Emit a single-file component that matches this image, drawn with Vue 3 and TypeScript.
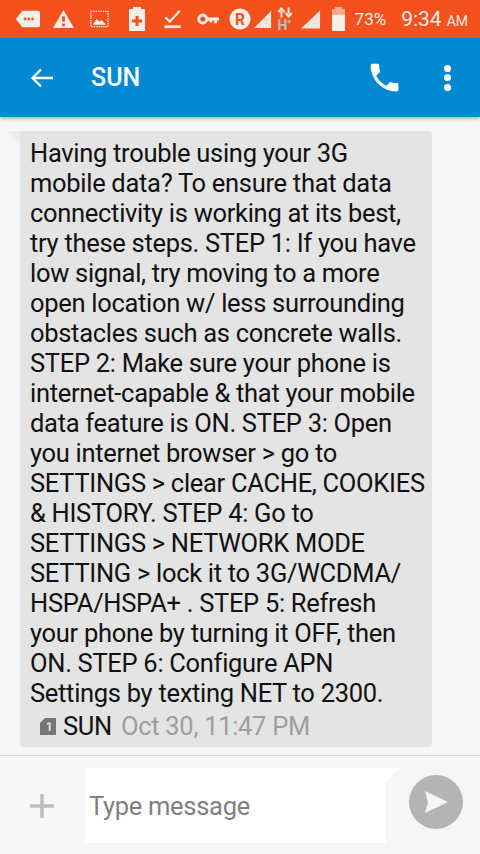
<script setup lang="ts">
const lines: string[] = [
  'Having trouble using your 3G',
  'mobile data? To ensure that data',
  'connectivity is working at its best,',
  'try these steps. STEP 1: If you have',
  'low signal, try moving to a more',
  'open location w/ less surrounding',
  'obstacles such as concrete walls.',
  'STEP 2: Make sure your phone is',
  'internet-capable & that your mobile',
  'data feature is ON. STEP 3: Open',
  'you internet browser > go to',
  'SETTINGS > clear CACHE, COOKIES',
  '& HISTORY. STEP 4: Go to',
  'SETTINGS > NETWORK MODE',
  'SETTING > lock it to 3G/WCDMA/',
  'HSPA/HSPA+ . STEP 5: Refresh',
  'your phone by turning it OFF, then',
  'ON. STEP 6: Configure APN',
  'Settings by texting NET to 2300.',
]
</script>

<template>
  <div class="screen">
    <div class="status">
      <div class="status-left">
        <svg class="i s-tag" viewBox="0 0 27 20"><path d="M1 10 8 1h17a2 2 0 0 1 2 2v14a2 2 0 0 1-2 2H8z" fill="#f3efe9"/><circle cx="11" cy="10" r="1.500" fill="#f4511e"/><circle cx="15" cy="10" r="1.500" fill="#f4511e"/><circle cx="19" cy="10" r="1.500" fill="#f4511e"/></svg>
        <svg class="i s-warn" viewBox="0 0 25 22"><path d="M12.500 1 24 21H1z" fill="#f3efe9"/><rect x="11" y="8" width="3" height="6" fill="#f4511e"/><rect x="11" y="16" width="3" height="3" fill="#f4511e"/></svg>
        <svg class="i s-img" viewBox="0 0 20 20"><rect x="1" y="2" width="18" height="16" fill="none" stroke="#f3efe9" stroke-width="1.500" stroke-dasharray="1.500 1"/><path d="M3 16l4-6 3 3 2-2 5 5z" fill="#f3efe9"/></svg>
        <svg class="i s-bat" viewBox="0 0 18 26"><path d="M5 3V1h8v2h3a1 1 0 0 1 1 1v21H1V4a1 1 0 0 1 1-1z" fill="#f3efe9"/><path d="M7.500 10h3v3.500H14v3h-3.500V20h-3v-3.500H4v-3h3.500z" fill="#f4511e"/></svg>
        <svg class="i s-check" viewBox="0 0 20 22"><path d="M2 9l5 5L18 2" fill="none" stroke="#f3efe9" stroke-width="2.500"/><rect x="1" y="18" width="18" height="3" fill="#f3efe9"/></svg>
        <svg class="i s-key" viewBox="0 0 23 14"><circle cx="6" cy="7" r="4.200" fill="none" stroke="#f3efe9" stroke-width="3"/><path d="M10 5.500h13v3h-2v3h-3v-3h-2v2h-3v-2h-3z" fill="#f3efe9"/></svg>
        <svg class="i s-r" viewBox="0 0 24 24"><circle cx="12" cy="12" r="11.500" fill="#f3efe9"/><text x="12" y="18" text-anchor="middle" class="r-letter">R</text></svg>
      </div>
      <div class="status-right">
        <svg class="i s-sig1" viewBox="0 0 20 20"><path d="M19 1v19H0z" fill="#f0e6e0"/></svg>
        <div class="hplus">
          <svg viewBox="0 0 20 11" class="arrows"><path d="M6 11V4M2.500 5 6 1l3.500 4M14 0v7M10.500 6 14 10l3.500-4" fill="none" stroke="#f3efe9" stroke-width="2.200"/></svg>
          <span>H<sup>+</sup></span>
        </div>
        <svg class="i s-sig2" viewBox="0 0 21 20"><path d="M20 1v19H0z" fill="#f0e6e0"/></svg>
        <svg class="i s-cell" viewBox="0 0 15 24"><path d="M4 0h7v2h3v6H1V2h3z" fill="#f6a98f"/><rect x="1" y="8" width="13" height="16" fill="#f6f0eb"/></svg>
        <span class="pct">73%</span>
        <span class="clock">9:34<small>AM</small></span>
      </div>
    </div>

    <header class="bar">
      <svg class="back" viewBox="0 0 24 24"><path d="M23 12H3M11 3.500 2.500 12l8.500 8.500" fill="none" stroke="#fff" stroke-width="2.300"/></svg>
      <span class="title">SUN</span>
      <svg class="phone" viewBox="0 0 24 24"><path d="M6.600 10.800c1.400 2.800 3.800 5.100 6.600 6.600l2.200-2.200c.3-.3.700-.4 1-.2 1.100.4 2.300.6 3.600.6.600 0 1 .4 1 1V20c0 .6-.4 1-1 1C10.600 21 3 13.400 3 4c0-.6.400-1 1-1h3.500c.6 0 1 .4 1 1 0 1.300.2 2.500.6 3.600.1.300 0 .7-.2 1z" fill="#fff"/></svg>
      <div class="dots"><i></i><i></i><i></i></div>
    </header>

    <main class="thread">
      <div class="bubble">
        <span class="tail"></span>
        <p v-for="line in lines" :key="line" class="line">{{ line }}</p>
        <div class="meta">
          <svg class="sim" viewBox="0 0 16 18"><path d="M5 1h10a1 1 0 0 1 1 1v15a1 1 0 0 1-1 1H1a1 1 0 0 1-1-1V6z" fill="#757575"/><text x="9" y="14" text-anchor="middle" class="sim-no">1</text></svg>
          <span class="sender">SUN</span>
          <span class="time">Oct 30, 11:47 PM</span>
        </div>
      </div>
    </main>

    <footer class="compose">
      <svg class="plus" viewBox="0 0 24 24"><path d="M12 0v24M0 12h24" stroke="#bdbdbd" stroke-width="3.500" fill="none"/></svg>
      <div class="field">
        <span class="placeholder">Type message</span>
        <span class="notch"></span>
      </div>
      <button class="send" type="button">
        <svg viewBox="0 0 24 24"><path d="M1 1 24 12 1 23l3-11z" fill="#f5f5f5"/></svg>
      </button>
    </footer>
  </div>
</template>

<style>
body { margin: 0; background: #f7f7f7; }
</style>

<style scoped>
.screen {
  width: 480px;
  height: 854px;
  display: flex;
  flex-direction: column;
  overflow: hidden;
  background: #f6f6f6;
  font-family: Roboto, "Liberation Sans", sans-serif;
}
.status {
  height: 38px;
  flex: none;
  box-sizing: border-box;
  background: #f4511e;
  display: flex;
  align-items: center;
  justify-content: space-between;
  padding: 0 12px 0 15px;
  color: #f6efe9;
}
.status-left { display: flex; align-items: center; }
.status-right { display: flex; align-items: center; }
.i { height: 20px; display: block; flex: none; }
.s-tag { width: 25px; }
.s-warn { width: 23px; margin-left: 12px; }
.s-img { width: 19px; margin-left: 15px; }
.s-bat { width: 18px; height: 26px; margin-left: 19px; }
.s-check { width: 19px; margin-left: 17px; }
.s-key { width: 22px; margin-left: 15px; }
.s-r { width: 22px; height: 22px; margin-left: 10px; }
.s-sig1 { width: 18px; }
.s-sig2 { width: 20px; margin-left: 7px; }
.s-cell { width: 15px; height: 24px; margin-left: 10px; }
.r-letter { font: 700 17px Roboto, sans-serif; fill: #f4511e; }
.hplus { width: 18px; margin-left: 4px; display: flex; flex-direction: column; align-items: center; }
.arrows { width: 18px; height: 11px; display: block; }
.hplus span { font-size: 14px; line-height: 14px; font-weight: 700; color: #bdbdbd; }
.hplus sup { font-size: 8px; line-height: 0; }
.pct { font-size: 17px; margin-left: 9px; }
.clock { font-size: 21px; margin-left: 15px; }
.clock small { font-size: 14px; margin-left: 5px; }

.bar {
  height: 79px;
  flex: none;
  background: #0288d1;
  display: flex;
  align-items: center;
  padding: 0 29px 0 30px;
  color: #fff;
  box-shadow: 0 2px 3px rgba(0, 0, 0, 0.25);
  position: relative;
}
.back { width: 24px; height: 24px; flex: none; }
.title { font-size: 25px; font-weight: 500; margin-left: 37px; flex: 1; }
.phone { width: 37px; height: 37px; flex: none; margin-right: 41px; }
.dots { display: flex; flex-direction: column; gap: 2.500px; }
.dots i { display: block; width: 7px; height: 7px; border-radius: 50%; background: #fff; }

.thread { flex: 1; padding: 14px 48px 0 20px; }
.bubble {
  position: relative;
  height: 616px;
  box-sizing: border-box;
  background: #e4e4e4;
  border-radius: 0 4px 4px 4px;
  padding: 7px 0 0 10px;
}
.tail {
  position: absolute;
  left: -14px;
  top: 0;
  border-top: 14px solid #ececec;
  border-left: 14px solid transparent;
}
.line {
  margin: 0;
  font-size: 25.500px;
  letter-spacing: -0.300px;
  line-height: 30px;
  color: #111;
  white-space: nowrap;
}
.meta {
  display: flex;
  align-items: center;
  height: 30px;
  margin-top: 3px;
  padding-left: 10px;
  font-size: 25.500px;
  letter-spacing: -0.300px;
}
.sim { width: 16px; height: 18px; margin-right: 7px; flex: none; }
.sim-no { font: 700 12px Roboto, sans-serif; fill: #e4e4e4; }
.sender { color: #111; margin-right: 9px; }
.time { color: #9e9e9e; }

.compose {
  height: 99px;
  flex: none;
  box-sizing: border-box;
  border-top: 1px solid #dcdcdc;
  display: flex;
  align-items: flex-start;
  padding: 12px 17px 0 30px;
}
.plus { width: 24px; height: 24px; flex: none; margin: 26px 31px 0 0; }
.field {
  position: relative;
  width: 301px;
  height: 75px;
  background: #fff;
  border-radius: 2px;
  display: flex;
  align-items: center;
  padding-left: 4px;
  box-sizing: border-box;
  flex: none;
}
.placeholder { font-size: 25.500px; letter-spacing: -0.300px; color: #808080; margin-top: 1px; }
.notch {
  position: absolute;
  left: 100%;
  top: 0;
  border-top: 14px solid #fff;
  border-right: 14px solid transparent;
}
.send {
  width: 54px;
  height: 54px;
  margin: 7px 0 0 auto;
  padding: 0;
  border: none;
  border-radius: 50%;
  background: #b4b4b4;
  display: flex;
  align-items: center;
  justify-content: center;
  flex: none;
}
.send svg { width: 24px; height: 24px; display: block; }
</style>
